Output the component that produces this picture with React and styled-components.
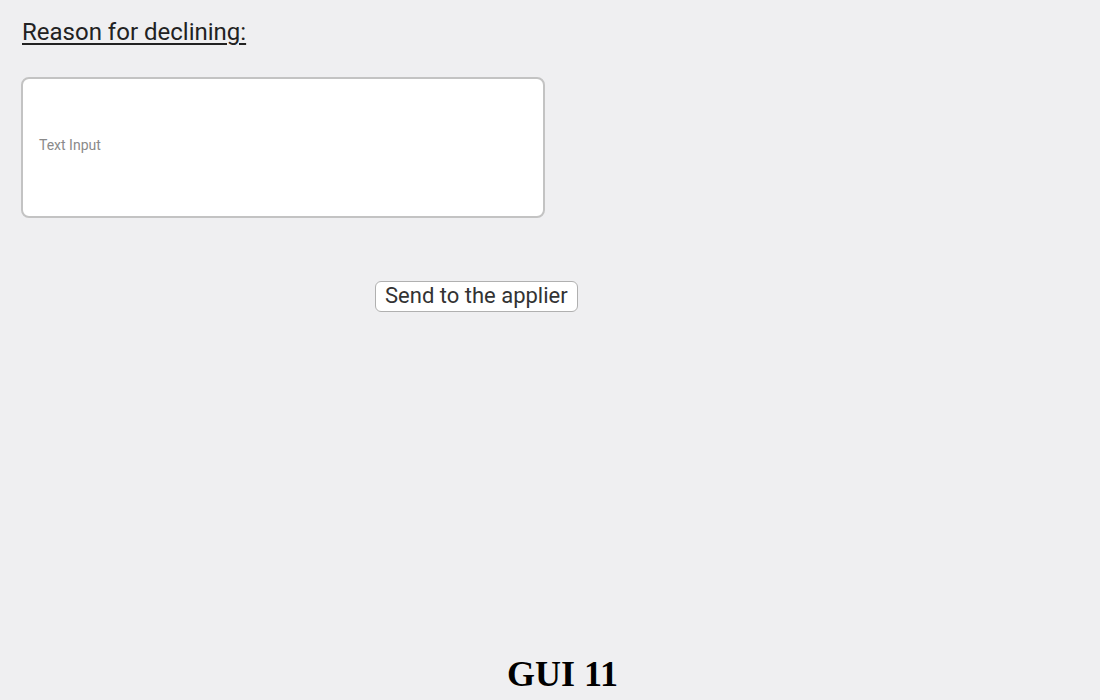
import React from 'react'
import styled, { createGlobalStyle } from 'styled-components'

const GlobalStyle = createGlobalStyle`
  html, body {
    margin: 0;
    padding: 0;
    background: #efeff1;
  }
  #root {
    min-height: 700px;
  }
`

const Page = styled.div`
  display: flex;
  flex-direction: column;
  width: 1100px;
  height: 700px;
  box-sizing: border-box;
  padding: 18px 0 0 21px;
  font-family: Roboto, "Liberation Sans", sans-serif;
`

const Title = styled.h2`
  margin: 0 0 0 1px;
  font-size: 24px;
  font-weight: 400;
  line-height: 28px;
  color: #222;
  text-decoration: underline;
  text-decoration-thickness: 1.5px;
  text-underline-offset: 3px;
`

const TextBox = styled.textarea`
  width: 524px;
  height: 141px;
  margin-top: 31px;
  box-sizing: border-box;
  padding: 0 16px;
  border: 2px solid #c3c3c3;
  border-radius: 8px;
  background: #fff;
  resize: none;
  outline: none;
  font-family: Roboto, "Liberation Sans", sans-serif;
  font-size: 14px;
  line-height: 132px;
  color: #333;

  &::placeholder {
    color: #8a8a8a;
  }
`

const SendButton = styled.button`
  align-self: flex-start;
  margin: 63px 0 0 354px;
  height: 31px;
  padding: 0 9px 1px;
  border: 1.5px solid #b0b0b0;
  border-radius: 6px;
  background: #fff;
  font-family: Roboto, "Liberation Sans", sans-serif;
  font-size: 22px;
  line-height: 28px;
  color: #333;
  cursor: pointer;
`

const Caption = styled.div`
  margin-top: auto;
  margin-left: 2px;
  padding-bottom: 6px;
  width: 1079px;
  text-align: center;
  font-family: "Liberation Serif", "Times New Roman", serif;
  font-weight: 700;
  font-size: 36px;
  line-height: 40px;
  color: #000;
`

const App = () => {
  return (
    <>
      <GlobalStyle />
      <Page>
        <Title>Reason for declining:</Title>
        <TextBox placeholder="Text Input" />
        <SendButton>Send to the applier</SendButton>
        <Caption>GUI 11</Caption>
      </Page>
    </>
  )
}

export default App
